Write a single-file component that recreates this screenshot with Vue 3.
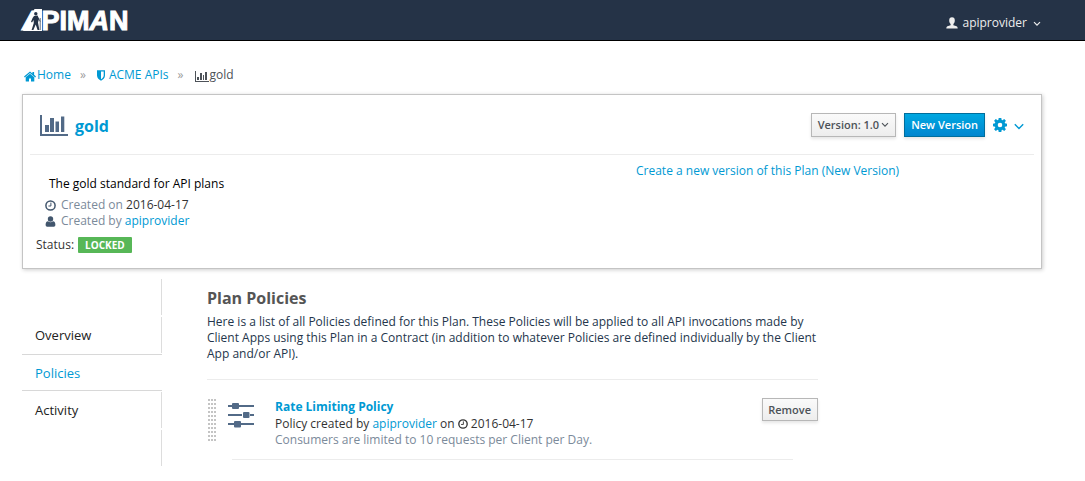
<script setup>
const steps = [
  { id: 'top', label: '' },
  { id: 'overview', label: 'Overview' },
  { id: 'policies', label: 'Policies', active: true },
  { id: 'activity', label: 'Activity' },
  { id: 'bottom', label: '' },
]
</script>

<template>
  <div class="page">
    <header class="topbar">
      <a class="brand" href="#" aria-label="APIMAN">
        <span class="slant">A</span><span>PIM</span><span class="slant">A</span><span>N</span>
        <svg class="shape" width="20" height="22" viewBox="0 0 20 22" aria-hidden="true">
          <path class="slope" d="M0 22L11.5 0H19V22Z" />
          <g class="hiker">
            <circle cx="12.8" cy="4.8" r="1.7" />
            <path d="M11 7L14.6 6.6L16 10L15 13.4L16.4 21H14.6L12.7 15.4L10.4 21H8.6L10.8 14L10.6 11L9 13.4L8 12.8L9.6 9Z" />
            <path class="staff" d="M15 8.5L17.2 12.5M17.2 9V21M12.4 9L13.6 12" />
          </g>
        </svg>
      </a>
      <button class="user" type="button">
        <svg width="12" height="12" viewBox="0 0 12 12" aria-hidden="true"><path fill="currentColor" d="M6 0.3C7.9 0.3 8.8 1.5 8.8 3.5C8.8 5.1 8.3 6.2 7.4 7V8.3L10.6 9.3Q11.7 9.7 11.7 11.6H0.3Q0.3 9.7 1.4 9.3L4.6 8.3V7C3.7 6.2 3.2 5.1 3.2 3.5C3.2 1.5 4.1 0.3 6 0.3Z" /></svg>
        <span>apiprovider</span>
        <svg class="caret" width="8" height="6" viewBox="0 0 8 6" aria-hidden="true"><path d="M1 1.2L4 4.2L7 1.2" fill="none" stroke="currentColor" stroke-width="1.2" /></svg>
      </button>
    </header>

    <div class="content">
      <nav class="crumbs" aria-label="Breadcrumb">
        <a class="crumb home" href="#">
          <svg width="12" height="11" viewBox="0 0 12 11" aria-hidden="true"><path fill="currentColor" d="M6 2.8L10.3 6.3V10.1Q10.3 10.6 9.8 10.6H7V7.5H5V10.6H2.2Q1.7 10.6 1.7 10.1V6.3ZM6 0.4L8.4 2.4V1H10.1V3.8L12 5.4L11.2 6.4L6 2L0.8 6.4L0 5.4Z" /></svg>Home</a>
        <span class="sep">»</span>
        <a class="crumb org" href="#">
          <svg width="8" height="11" viewBox="0 0 8 11" aria-hidden="true"><path fill="currentColor" fill-rule="evenodd" d="M0 0.3H8V5.5C8 8 6 9.6 4 10.8C2 9.6 0 8 0 5.5ZM4 1.6V9.2C5.5 8.2 6.7 7 6.7 5.5V1.6Z" /></svg>ACME APIs</a>
        <span class="sep">»</span>
        <span class="crumb here">
          <svg width="14" height="11" viewBox="0 0 14 11" aria-hidden="true"><path fill="currentColor" d="M0 0H1V10H14V11H0ZM2 6H4V9H2ZM5 2H7V9H5ZM8 4H9V9H8ZM10 1H12V9H10Z" /></svg>gold</span>
      </nav>

      <section class="panel">
        <div class="panel-head">
          <svg class="chart" width="28" height="21" viewBox="0 0 28 21" aria-hidden="true"><path fill="currentColor" d="M0 0H2V19H28V21H0ZM5 10H9V17H5ZM10 3H14V17H10ZM15.5 6.5H19V17H15.5ZM21 1.5H24.3V17H21Z" /></svg>
          <h1><a href="#">gold</a></h1>
          <div class="actions">
            <button class="btn" type="button">Version: 1.0
              <svg width="8" height="6" viewBox="0 0 8 6" aria-hidden="true"><path d="M1 1.2L4 4.2L7 1.2" fill="none" stroke="currentColor" stroke-width="1.1" /></svg>
            </button>
            <button class="btn primary" type="button">New Version</button>
            <button class="gear" type="button" aria-label="Settings">
              <svg width="14" height="14" viewBox="0 0 14 14" aria-hidden="true"><path fill="currentColor" fill-rule="evenodd" d="M5.7 0H8.3L8.7 2L9.5 2.3L11.2 1.1L12.9 2.8L11.7 4.5L12 5.3L14 5.7V8.3L12 8.7L11.7 9.5L12.9 11.2L11.2 12.9L9.5 11.7L8.7 12L8.3 14H5.7L5.3 12L4.5 11.7L2.8 12.9L1.1 11.2L2.3 9.5L2 8.7L0 8.3V5.7L2 5.3L2.3 4.5L1.1 2.8L2.8 1.1L4.5 2.3L5.3 2ZM7 4.7A2.3 2.3 0 1 0 7 9.3A2.3 2.3 0 1 0 7 4.7Z" /></svg>
              <svg class="gear-caret" width="10" height="7" viewBox="0 0 10 7" aria-hidden="true"><path d="M0.8 1.2L5 5.4L9.2 1.2" fill="none" stroke="currentColor" stroke-width="1.4" /></svg>
            </button>
          </div>
        </div>
        <div class="panel-body">
          <div class="facts">
            <p class="desc">The gold standard for API plans</p>
            <p class="fact">
              <svg width="11" height="11" viewBox="0 0 11 11" aria-hidden="true"><circle cx="5.5" cy="5.5" r="4.6" fill="none" stroke="currentColor" stroke-width="1.5" /><path d="M5.9 2.6V6H3.4" fill="none" stroke="currentColor" stroke-width="1" /></svg>
              <span>Created on <b>2016-04-17</b></span>
            </p>
            <p class="fact">
              <svg width="11" height="11" viewBox="0 0 11 11" aria-hidden="true"><circle cx="5.5" cy="3" r="2.7" fill="currentColor" /><path fill="currentColor" d="M3 5.2Q5.5 7.4 8 5.2Q10.4 5.4 10.4 9Q10.4 10.7 8.8 10.7H2.2Q0.6 10.7 0.6 9Q0.6 5.4 3 5.2Z" /></svg>
              <span>Created by <a href="#">apiprovider</a></span>
            </p>
            <p class="status">Status: <span class="badge">LOCKED</span></p>
          </div>
          <div><a href="#">Create a new version of this Plan (New Version)</a></div>
        </div>
      </section>

      <div class="columns">
        <nav class="side" aria-label="Plan">
          <div v-for="s in steps" :key="s.id" class="tab" :class="{ active: s.active }">
            <a v-if="s.label" href="#">{{ s.label }}</a>
          </div>
        </nav>
        <main class="main">
          <h2>Plan Policies</h2>
          <p class="intro">Here is a list of all Policies defined for this Plan. These Policies will be applied to all API invocations made by Client Apps using this Plan in a Contract (in addition to whatever Policies are defined individually by the Client App and/or API).</p>
          <article class="policy">
            <span class="grip"></span>
            <svg class="sliders" width="26" height="25" viewBox="0 0 26 25" aria-hidden="true"><path fill="currentColor" d="M0 2H4V4H0ZM11 2H26V4H11ZM0 11H14V13H0ZM22 11H26V13H22ZM0 20H6V22H0ZM13 20H26V22H13Z" /><rect x="4" y="0" width="7" height="6" rx="1" fill="currentColor" /><rect x="15" y="9" width="6.5" height="6" rx="1" fill="currentColor" /><rect x="6" y="18" width="7" height="6.5" rx="1" fill="currentColor" /></svg>
            <div class="policy-text">
              <h3><a href="#">Rate Limiting Policy</a></h3>
              <p>Policy created by <a href="#">apiprovider</a> on
                <svg width="10" height="10" viewBox="0 0 11 11" aria-hidden="true"><circle cx="5.5" cy="5.5" r="4.6" fill="none" stroke="currentColor" stroke-width="1.5" /><path d="M5.9 2.6V6H3.4" fill="none" stroke="currentColor" stroke-width="1" /></svg>
                2016-04-17</p>
              <p class="muted">Consumers are limited to 10 requests per Client per Day.</p>
            </div>
            <button class="btn remove" type="button">Remove</button>
          </article>
          <hr class="end" />
        </main>
      </div>
    </div>
  </div>
</template>

<style>
body {
  background: #fff;
}
</style>

<style scoped>
.page {
  font: 12px/16px "Open Sans", sans-serif;
  color: #333;
}
h1, h2, h3, p {
  margin: 0;
}
a {
  color: #0099d3;
  text-decoration: none;
}
button {
  font: inherit;
  cursor: pointer;
}
svg {
  flex: none;
}
.topbar {
  display: flex;
  justify-content: space-between;
  align-items: center;
  height: 40px;
  padding: 0 43px 0 22px;
  background: #253347;
  border-bottom: 1px solid #000;
}
.brand {
  position: relative;
  display: flex;
  padding-top: 2px;
  color: #fff;
  font: bold 27px/40px "Liberation Sans", sans-serif;
  -webkit-text-stroke: 1px #fff;
}
.slant {
  font-style: italic;
}
.shape {
  position: absolute;
  left: 1px;
  top: 10px;
}
.slope {
  fill: #fff;
}
.hiker {
  fill: #253347;
}
.staff {
  fill: none;
  stroke: #253347;
  stroke-width: 0.7;
}
.user {
  display: flex;
  align-items: center;
  gap: 4px;
  padding: 5px 0 0;
  border: 0;
  background: none;
  color: #eee;
}
.caret {
  margin: 2px 1px 0 2px;
}
.content {
  padding: 26px 43px 15px 22px;
}
.crumbs {
  display: flex;
  align-items: center;
  padding-left: 2px;
}
.crumb {
  display: flex;
  align-items: center;
}
.home svg {
  margin: 2px 1px 0 0;
}
.org svg {
  margin: 1px 4px 0 0;
}
.here {
  color: #4d5258;
}
.here svg {
  margin: 2px 1px 0 0;
}
.sep {
  width: 26px;
  padding-left: 9px;
  box-sizing: border-box;
  color: #9c9c9c;
}
.panel {
  margin-top: 11px;
  padding: 0 7px 15px;
  border: 1px solid #c4c4c4;
  box-shadow: 1px 1px 4px rgba(0, 0, 0, 0.2);
}
.panel-head {
  display: flex;
  align-items: center;
  height: 59px;
  padding: 0 10px;
  border-bottom: 1px solid #ececec;
}
.chart {
  margin-top: 2px;
  color: #526a87;
}
h1 {
  margin: 2px 0 0 7px;
  font: bold 16px/22px "Open Sans", sans-serif;
}
.actions {
  display: flex;
  align-items: center;
  gap: 8px;
  margin-left: auto;
}
.btn {
  display: flex;
  align-items: center;
  gap: 2px;
  padding: 3px 6px;
  border: 1px solid #b7b7b7;
  background: linear-gradient(#fafafa, #ededed);
  box-shadow: 0 2px 3px rgba(3, 3, 3, 0.1);
  color: #4d5258;
  font-size: 11px;
  font-weight: 600;
  white-space: nowrap;
}
.primary {
  border-color: #006e9c;
  background: linear-gradient(#00a8e1, #0085cf);
  color: #fff;
}
.gear {
  display: flex;
  align-items: center;
  gap: 7px;
  padding: 0;
  border: 0;
  background: none;
  color: #0099d3;
}
.gear-caret {
  margin-top: 4px;
}
.panel-body {
  display: grid;
  grid-template-columns: 606fr 398fr;
  padding-top: 8px;
}
.facts {
  padding: 13px 0 0 6px;
}
.desc {
  margin: 0 0 5px 13px;
  color: #000;
}
.fact {
  display: flex;
  align-items: center;
  gap: 5px;
  padding-left: 9px;
  color: #7b8a9a;
}
.fact svg {
  margin-top: 1px;
  color: #42566d;
}
.fact b {
  color: #333;
  font-weight: 400;
}
.status {
  display: flex;
  gap: 4px;
  margin-top: 8px;
}
.badge {
  padding: 0 7px;
  border-radius: 1px;
  background: #57b757;
  color: #fff;
  font-size: 10px;
  font-weight: 700;
}
.columns {
  display: grid;
  grid-template-columns: 140px 656fr 224fr;
  margin-top: 10px;
}
.side {
  font-size: 13px;
}
.tab {
  display: flex;
  align-items: center;
  height: 36px;
  margin-bottom: 2px;
  padding-left: 13px;
  border-right: 1px solid #ddd;
}
.tab.active {
  height: 35px;
  margin: -1px 0 1px;
  border: solid #d8d8d8;
  border-width: 1px 0;
}
.tab a {
  color: #222;
}
.tab.active a {
  color: #0099d3;
}
.main {
  padding: 8px 0 0 45px;
}
h2 {
  color: #555;
  font: bold 16px/22px "Open Sans", sans-serif;
}
.intro {
  margin-top: 5px;
  padding-bottom: 17px;
  border-bottom: 1px solid #ececec;
  color: #24364c;
}
.policy {
  display: flex;
  align-items: flex-start;
  padding-top: 18px;
}
.grip {
  width: 8px;
  height: 42px;
  margin: 1px 12px 0 1px;
  background: radial-gradient(circle at 1px 1px, #c4c4c4 1px, transparent 1px) 0 0 / 3px 4px;
}
.sliders {
  margin: 5px 21px 0 0;
  color: #526a87;
}
.policy-text {
  flex: 1;
  padding-top: 1px;
}
h3 {
  margin-bottom: 1px;
  font: bold 12px/16px "Open Sans", sans-serif;
}
.policy-text svg {
  vertical-align: -1px;
}
.muted {
  color: #7b8a9a;
}
.remove {
  padding: 3px 6px 2px 5px;
}
.end {
  margin: 11px 25px 0;
  border: 0;
  border-top: 1px solid #ececec;
}
</style>
